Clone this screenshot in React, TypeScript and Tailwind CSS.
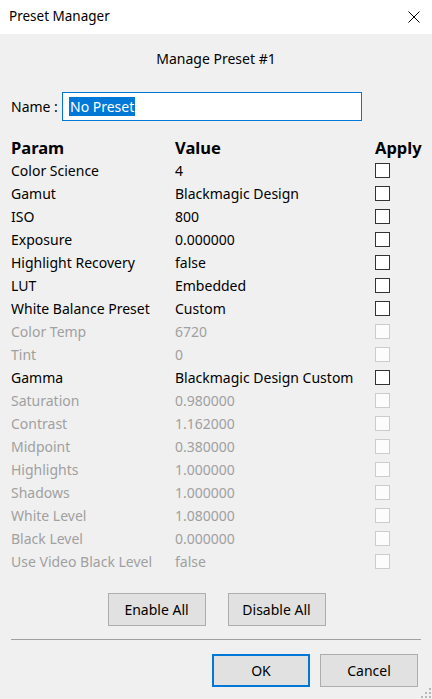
import React, { useState } from 'react';

type Row = { param: string; value: string; enabled: boolean };

const rows: Row[] = [
  { param: 'Color Science', value: '4', enabled: true },
  { param: 'Gamut', value: 'Blackmagic Design', enabled: true },
  { param: 'ISO', value: '800', enabled: true },
  { param: 'Exposure', value: '0.000000', enabled: true },
  { param: 'Highlight Recovery', value: 'false', enabled: true },
  { param: 'LUT', value: 'Embedded', enabled: true },
  { param: 'White Balance Preset', value: 'Custom', enabled: true },
  { param: 'Color Temp', value: '6720', enabled: false },
  { param: 'Tint', value: '0', enabled: false },
  { param: 'Gamma', value: 'Blackmagic Design Custom', enabled: true },
  { param: 'Saturation', value: '0.980000', enabled: false },
  { param: 'Contrast', value: '1.162000', enabled: false },
  { param: 'Midpoint', value: '0.380000', enabled: false },
  { param: 'Highlights', value: '1.000000', enabled: false },
  { param: 'Shadows', value: '1.000000', enabled: false },
  { param: 'White Level', value: '1.080000', enabled: false },
  { param: 'Black Level', value: '0.000000', enabled: false },
  { param: 'Use Video Black Level', value: 'false', enabled: false },
];

const App = () => {
  const [checked, setChecked] = useState<boolean[]>(rows.map(() => false));

  const toggle = (i: number) => {
    if (!rows[i].enabled) return;
    setChecked((prev) => prev.map((c, j) => (j === i ? !c : c)));
  };

  return (
    <div
      className="w-[432px] h-[699px] bg-[#f0f0f0] flex flex-col text-[#000] overflow-hidden relative"
      style={{ fontFamily: '"Noto Sans", "Open Sans", sans-serif' }}
    >
      {/* title bar */}
      <div className="h-[34px] bg-white flex items-center justify-between pl-[9px] pr-[12px] shrink-0">
        <span className="text-[13.5px] leading-none">Preset Manager</span>
        <svg width="12" height="12" viewBox="0 0 12 12">
          <path d="M0.5 0.5L11.5 11.5M11.5 0.5L0.5 11.5" stroke="#000" strokeWidth="1" />
        </svg>
      </div>

      <div className="h-[20px] mt-[14px] flex items-center justify-center text-[14px]">Manage Preset #1</div>

      {/* name */}
      <div className="mt-[24px] flex items-center pl-[11px]">
        <span className="w-[51px] text-[14px]">Name :</span>
        <div className="w-[300px] h-[29px] border border-[#0078d7] bg-white flex items-center pl-[6px]">
          <span className="bg-[#0078d7] text-white text-[14px] leading-[19px] px-[1px]">No Preset</span>
        </div>
      </div>

      {/* table */}
      <div className="mt-[15px] pl-[11px]">
        <div className="grid grid-cols-[164px_200px_1fr] h-[23px] items-center text-[16.5px] font-bold">
          <span>Param</span>
          <span>Value</span>
          <span>Apply</span>
        </div>
        {rows.map((r, i) => (
          <div
            key={r.param}
            className={`grid grid-cols-[164px_200px_1fr] h-[23px] items-center text-[14px] ${r.enabled ? 'text-black' : 'text-[#a0a0a0]'}`}
          >
            <span className="whitespace-nowrap">{r.param}</span>
            <span className="whitespace-nowrap">{r.value}</span>
            <span
              onClick={() => toggle(i)}
              className={`w-[15px] h-[15px] border ${r.enabled ? 'border-[#333333] bg-white' : 'border-[#cccccc] bg-[#fcfcfc]'} flex items-center justify-center`}
            >
              {checked[i] && (
                <svg width="11" height="11" viewBox="0 0 11 11">
                  <path d="M1.5 5.5L4.5 8.5L9.5 2.5" stroke="#000" strokeWidth="1.5" fill="none" />
                </svg>
              )}
            </span>
          </div>
        ))}
      </div>

      {/* enable/disable */}
      <div className="mt-[20px] flex justify-center gap-[22px] pl-[1px]">
        <button className="w-[98px] h-[33px] bg-[#e1e1e1] border border-[#adadad] text-[14px]">Enable All</button>
        <button className="w-[98px] h-[33px] bg-[#e1e1e1] border border-[#adadad] text-[14px]">Disable All</button>
      </div>

      <div className="mt-[13px] mx-[11px] h-px bg-[#a0a0a0]" />

      <div className="mt-[14px] flex justify-end gap-[10px] pr-[14px]">
        <button className="w-[98px] h-[33px] bg-[#e1e1e1] border-2 border-[#0078d7] text-[14px]">OK</button>
        <button className="w-[98px] h-[33px] bg-[#e1e1e1] border border-[#adadad] text-[14px]">Cancel</button>
      </div>

      {/* resize grip */}
      <svg className="absolute right-[1px] bottom-[1px]" width="10" height="10" viewBox="0 0 10 10">
        <g fill="#b8b8b8">
          <rect x="8" y="0" width="2" height="2" />
          <rect x="4" y="4" width="2" height="2" />
          <rect x="8" y="4" width="2" height="2" />
          <rect x="0" y="8" width="2" height="2" />
          <rect x="4" y="8" width="2" height="2" />
          <rect x="8" y="8" width="2" height="2" />
        </g>
      </svg>
    </div>
  );
};

export default App;
